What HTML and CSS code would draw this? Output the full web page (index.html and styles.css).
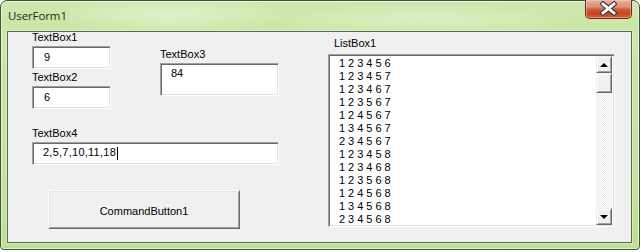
FILE: index.html
```html
<!DOCTYPE html>
<html>
<head>
<meta charset="utf-8">
<title>UserForm1</title>
<link rel="stylesheet" href="styles.css">
</head>
<body>
<div class="window">
  <div class="titlebar">
    <span class="title">UserForm1</span>
    <div class="close">
      <svg width="47" height="19" viewBox="0 0 47 19">
        <path d="M18 5 L29 14 M29 5 L18 14" stroke="#3b3b3b" stroke-width="5" stroke-linecap="square" fill="none"/>
        <path d="M18 5 L29 14 M29 5 L18 14" stroke="#ffffff" stroke-width="2.8" stroke-linecap="square" fill="none"/>
      </svg>
    </div>
  </div>
  <div class="client">
    <div class="left">
      <div class="top-row">
        <div class="col-a">
          <div class="label">TextBox1</div>
          <div class="textbox tb-small">9</div>
          <div class="label lbl2">TextBox2</div>
          <div class="textbox tb-small">6</div>
        </div>
        <div class="col-b">
          <div class="label">TextBox3</div>
          <div class="textbox tb3">84</div>
        </div>
      </div>
      <div class="label lbl4">TextBox4</div>
      <div class="textbox tb4"><span class="tb4-text">2,5,7,10,11,18</span><span class="caret"></span></div>
      <div class="cmd-button">CommandButton1</div>
    </div>
    <div class="list-col">
      <div class="label">ListBox1</div>
      <div class="listbox">
        <div class="items">
          <div class="item">123456</div>
          <div class="item">123457</div>
          <div class="item">123467</div>
          <div class="item">123567</div>
          <div class="item">124567</div>
          <div class="item">134567</div>
          <div class="item">234567</div>
          <div class="item">123458</div>
          <div class="item">123468</div>
          <div class="item">123568</div>
          <div class="item">124568</div>
          <div class="item">134568</div>
          <div class="item">234568</div>
        </div>
        <div class="scrollbar">
          <div class="sb-btn"><span class="arrow-up"></span></div>
          <div class="sb-thumb"></div>
          <div class="sb-track"></div>
          <div class="sb-btn"><span class="arrow-down"></span></div>
        </div>
      </div>
    </div>
  </div>
</div>
</body>
</html>
```
FILE: styles.css
```css
* { box-sizing: border-box; }
html, body { margin: 0; padding: 0; background: #ffffff; }
body {
  width: 641px;
  height: 252px;
  overflow: hidden;
  font-family: "Liberation Sans", Arial, sans-serif;
  font-size: 11px;
  color: #000;
}
.window {
  width: 640px;
  height: 250px;
  border: 1px solid #42523c;
  border-radius: 7px 7px 4px 4px;
  background:
    radial-gradient(ellipse 120px 18px at 170px 14px, rgba(240,250,225,0.55), rgba(240,250,225,0) 100%),
    radial-gradient(ellipse 160px 16px at 420px 18px, rgba(235,248,220,0.5), rgba(235,248,220,0) 100%),
    linear-gradient(to bottom, #cfe7ae 0px, #cbe6a6 30px, #c5e39c 180px, #bde18e 248px);
  box-shadow: inset 0 0 0 1px rgba(255,255,255,0.55);
  padding: 0 7px 6px 6px;
  display: flex;
  flex-direction: column;
}
.titlebar {
  height: 30px;
  display: flex;
  justify-content: space-between;
  align-items: flex-start;
}
.title {
  font-family: "Open Sans", "Noto Sans", sans-serif;
  font-size: 11.5px;
  line-height: 14px;
  color: #1d2b1b;
  margin-top: 8px;
  margin-left: 1px;
  letter-spacing: -0.1px;
}
.close {
  width: 47px;
  height: 19px;
  margin-top: -1px;
  border: 1px solid #6e2b18;
  border-top: none;
  border-radius: 0 0 5px 5px;
  background: linear-gradient(to bottom, #eaad9a 0%, #dd8e75 40%, #cf5e3c 50%, #c5441f 75%, #d4603a 100%);
  box-shadow: inset 0 0 0 1px rgba(255,220,200,0.45);
}
.close svg { display: block; margin: -1px 0 0 -1px; }

.client {
  flex: 1;
  background: #f0f0f0;
  border: 1px solid #5c6659;
  box-shadow: 0 0 0 1px rgba(255,255,255,0.35);
  display: flex;
  padding-left: 24px;
}
.left {
  width: 296px;
  display: flex;
  flex-direction: column;
}
.top-row { display: flex; }
.col-a { width: 79px; display: flex; flex-direction: column; }
.col-b { margin-left: 49px; margin-top: 17px; display: flex; flex-direction: column; }
.label { line-height: 11px; height: 11px; white-space: nowrap; }
.lbl2 { margin-top: 3px; }
.lbl4 { margin-top: 19px; }

.textbox {
  margin-top: 3px;
  background: #ffffff;
  border: 1px solid;
  border-color: #a0a0a0 #ffffff #ffffff #a0a0a0;
  box-shadow: inset 1px 1px 0 #696969, inset -1px -1px 0 #e3e3e3;
  line-height: 12px;
  white-space: nowrap;
  font-family: "Liberation Sans", Arial, sans-serif;
}
.tb-small { width: 79px; height: 23px; padding: 4px 0 0 11px; }
.tb3 { width: 119px; height: 33px; padding: 3px 0 0 10px; }
.tb4 { width: 247px; height: 23px; padding: 3px 0 0 10px; display: flex; align-items: flex-start; }
.tb4-text { letter-spacing: 0.25px; }
.caret {
  display: inline-block;
  width: 1px;
  height: 13px;
  background: #000;
  margin-left: 1px;
  margin-top: 1px;
}
.cmd-button {
  margin-top: 25px;
  margin-left: 16px;
  width: 192px;
  height: 39px;
  background: #f0f0f0;
  border: 1px solid;
  border-color: #ffffff #696969 #696969 #ffffff;
  box-shadow: inset 1px 1px 0 #e3e3e3, inset -1px -1px 0 #a0a0a0;
  display: flex;
  align-items: center;
  justify-content: center;
  padding-top: 3px;
}

.list-col { display: flex; flex-direction: column; }
.list-col .label { margin-top: 6px; margin-left: 6px; }
.listbox {
  margin-top: 5px;
  width: 287px;
  height: 173px;
  background: #ffffff;
  border: 1px solid;
  border-color: #a0a0a0 #ffffff #ffffff #a0a0a0;
  box-shadow: inset 1px 1px 0 #696969, inset -1px -1px 0 #e3e3e3;
  padding: 1px;
  display: flex;
  overflow: hidden;
}
.items {
  flex: 1;
  padding: 1px 0 0 9px;
  overflow: hidden;
}
.item {
  height: 13px;
  line-height: 13px;
  letter-spacing: 3px;
  white-space: nowrap;
}
.scrollbar {
  width: 16px;
  display: flex;
  flex-direction: column;
  margin-right: 1px;
}
.sb-btn, .sb-thumb {
  background: #f0f0f0;
  border: 1px solid;
  border-color: #f0f0f0 #696969 #696969 #f0f0f0;
  box-shadow: inset 1px 1px 0 #ffffff, inset -1px -1px 0 #a0a0a0;
}
.sb-btn {
  height: 17px;
  display: flex;
  align-items: center;
  justify-content: center;
}
.sb-thumb { height: 20px; }
.sb-track {
  flex: 1;
  background: repeating-conic-gradient(#ebebeb 0 25%, #ffffff 0 50%) 0 0 / 2px 2px;
}
.arrow-up, .arrow-down {
  width: 0;
  height: 0;
  border-left: 4px solid transparent;
  border-right: 4px solid transparent;
}
.arrow-up { border-bottom: 4px solid #000; }
.arrow-down { border-top: 4px solid #000; }
```
